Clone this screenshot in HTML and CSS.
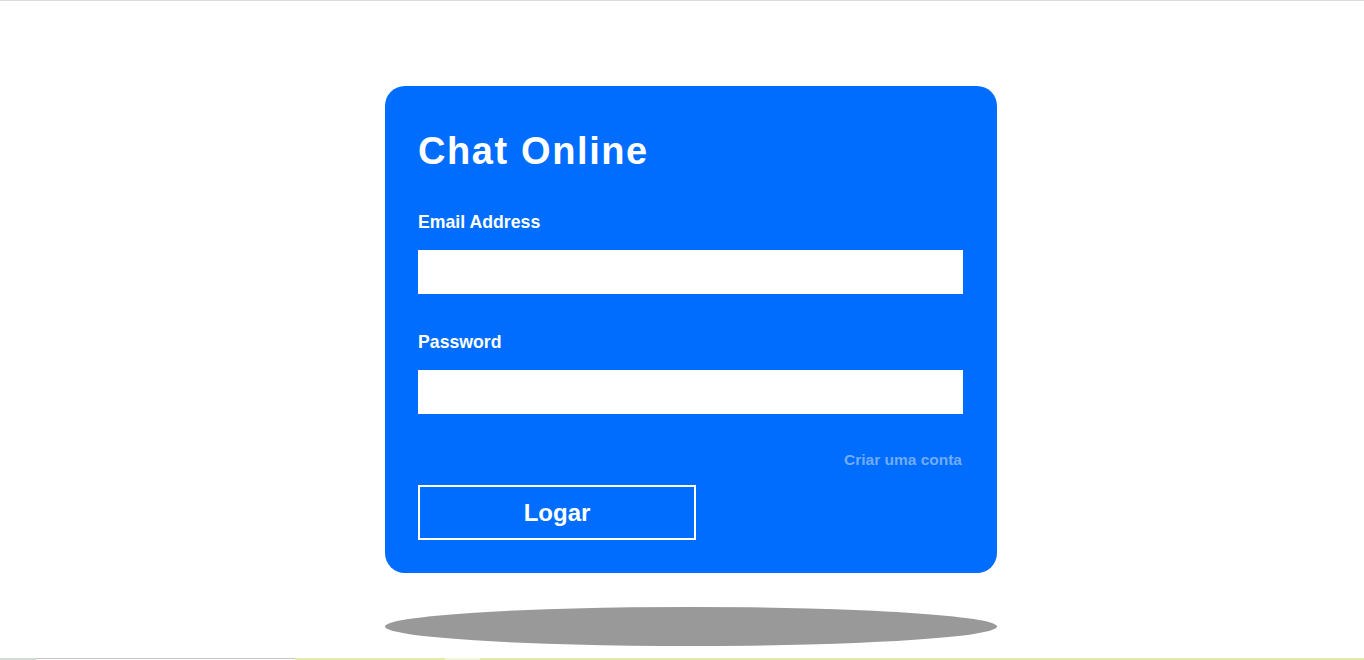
FILE: index.html
```html
<!DOCTYPE html>
<html lang="pt">
<head>
<meta charset="utf-8">
<title>Chat Online</title>
<link rel="stylesheet" href="styles.css">
</head>
<body>
<div class="topline"></div>
<main class="stage">
  <form class="card">
    <h1 class="title">Chat Online</h1>
    <label class="label" for="email">Email Address</label>
    <input class="field" id="email" type="email">
    <label class="label label-gap" for="pass">Password</label>
    <input class="field" id="pass" type="password">
    <a class="signup" href="#">Criar uma conta</a>
    <button class="btn" type="button">Logar</button>
  </form>
  <div class="shadow"></div>
</main>
<div class="strip">
  <span class="s1"></span><span class="s2"></span><span class="s3"></span><span class="s4"></span><span class="s5"></span>
</div>
</body>
</html>
```
FILE: styles.css
```css
html, body {
  margin: 0;
  padding: 0;
  background: #ffffff;
  font-family: "Liberation Sans", Arial, sans-serif;
  overflow: hidden;
  height: 660px;
}
.topline {
  height: 1px;
  background: #dcdce0;
}
.stage {
  display: flex;
  flex-direction: column;
  align-items: center;
  padding-top: 85px;
  padding-left: 18px;
  height: 572px;
}
.card {
  box-sizing: border-box;
  width: 612px;
  height: 487px;
  background: #006dff;
  border-radius: 20px;
  padding: 33px 34px 33px 33px;
  display: flex;
  flex-direction: column;
  align-items: stretch;
}
.title {
  margin: 10px 0 0;
  font-size: 38px;
  line-height: 44px;
  font-weight: 700;
  letter-spacing: 1.6px;
  color: #ffffff;
}
.label {
  margin-top: 39px;
  font-size: 17.7px;
  line-height: 20px;
  font-weight: 700;
  color: #ffffff;
}
.label-gap {
  margin-top: 38px;
}
.field {
  margin-top: 18px;
  height: 44px;
  border: none;
  padding: 0 10px;
  background: #ffffff;
  outline: none;
}
.signup {
  margin-top: 37px;
  align-self: flex-end;
  margin-right: 1px;
  font-size: 15.5px;
  line-height: 18px;
  font-weight: 700;
  color: #72acf8;
  text-decoration: none;
}
.btn {
  margin-top: 16px;
  width: 278px;
  height: 55px;
  background: transparent;
  border: 2px solid #ffffff;
  color: #ffffff;
  font-family: "Liberation Sans", Arial, sans-serif;
  font-size: 24px;
  font-weight: 700;
  padding: 0;
}
.shadow {
  margin-top: 34px;
  width: 612px;
  height: 39px;
  background: #999999;
  border-radius: 50%;
}
.strip {
  display: flex;
  height: 2px;
}
.strip span { display: block; height: 2px; }
.s1 { width: 36px; background: #d0dcd4; }
.s2 { width: 259px; background: #ffffff; border-top: 1px solid #c4c4c4; box-sizing: border-box; }
.s3 { width: 150px; background: #e4ecaa; }
.s4 { width: 35px; background: #f2f6d8; }
.s5 { flex: 1; background: #e4eaa8; }
```
